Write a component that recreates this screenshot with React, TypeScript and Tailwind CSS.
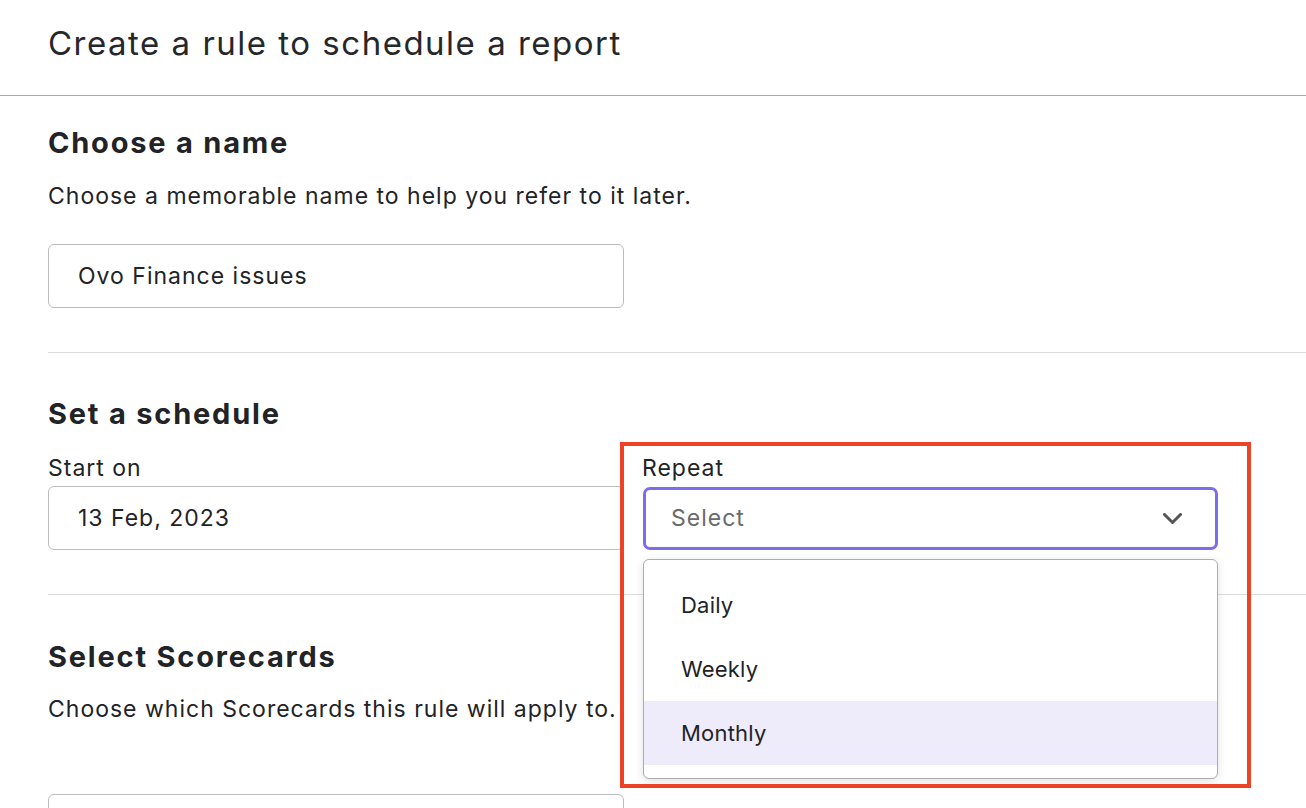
import React from "react";

export default function App() {
  return (
    <div className="w-[1306px] h-[808px] overflow-hidden bg-white font-['Inter',sans-serif] text-[#222327]">
      <header className="h-[96px] border-b border-[#a9a9a9] pl-12 pt-[24px]">
        <h1 className="text-[33px] leading-[38px] font-normal tracking-[1.5px] text-[#26272b]">
          Create a rule to schedule a report
        </h1>
      </header>
      <main className="pl-12">
        <section className="pt-[30px] pb-[44px] border-b border-[#dddddd]">
          <h2 className="text-[29px] leading-[34px] font-bold tracking-[1.8px]">Choose a name</h2>
          <p className="mt-[21px] text-[23px] leading-[30px] tracking-[1px]">
            Choose a memorable name to help you refer to it later.
          </p>
          <div className="mt-[33px] w-[576px] h-[64px] border border-[#bcbcbc] rounded-[6px] pl-[29px] flex items-center text-[23px] tracking-[1px]">
            Ovo Finance issues
          </div>
        </section>
        <section className="pt-[44px] pb-[44px] border-b border-[#dddddd]">
          <h2 className="text-[29px] leading-[34px] font-bold tracking-[1.8px]">Set a schedule</h2>
          <div className="mt-[24px] grid grid-cols-[576px_575px] gap-x-[19px]">
            <div>
              <div className="text-[23px] leading-[26px] tracking-[1px]">Start on</div>
              <div className="mt-[5px] h-[64px] border border-[#bcbcbc] rounded-[6px] pl-[29px] flex items-center text-[23px] tracking-[1px]">
                13 Feb, 2023
              </div>
            </div>
            <div className="relative">
              <div className="text-[23px] leading-[26px] tracking-[1px] -ml-[1px]">Repeat</div>
              <div className="mt-[6px] h-[63px] border-[3px] border-[#7b6cf0] rounded-[7px] pl-[25px] pr-[33px] flex items-center justify-between text-[23px] tracking-[1px] text-[#6a6a6a] bg-white">
                <span>Select</span>
                <svg width="19" height="11" viewBox="0 0 19 11" fill="none">
                  <polyline
                    points="1.5,1.5 9.5,9.5 17.5,1.5"
                    stroke="#555555"
                    strokeWidth="3"
                    strokeLinecap="round"
                    strokeLinejoin="round"
                  />
                </svg>
              </div>
              <div className="absolute left-0 top-[104px] w-[575px] h-[220px] z-10 border border-[#adadad] rounded-[6px] bg-white shadow-[0_2px_8px_rgba(0,0,0,0.12)] py-[13px] text-[22px] tracking-[0.2px] overflow-hidden">
                <div className="h-[64px] pl-[37px] flex items-center">Daily</div>
                <div className="h-[64px] pl-[37px] flex items-center">Weekly</div>
                <div className="h-[64px] pl-[37px] flex items-center bg-[#eeebfb]">Monthly</div>
              </div>
              <div className="absolute left-[-23px] top-[-13px] w-[631px] h-[346px] border-[4px] border-[#ee4227] z-20 pointer-events-none" />
            </div>
          </div>
        </section>
        <section className="pt-[45px]">
          <h2 className="text-[29px] leading-[34px] font-bold tracking-[1.8px]">Select Scorecards</h2>
          <p className="mt-[20px] text-[23px] leading-[30px] tracking-[1px]">
            Choose which Scorecards this rule will apply to.
          </p>
          <div className="mt-[70px] w-[576px] h-[64px] border border-[#bcbcbc] rounded-[6px]" />
        </section>
      </main>
    </div>
  );
}
